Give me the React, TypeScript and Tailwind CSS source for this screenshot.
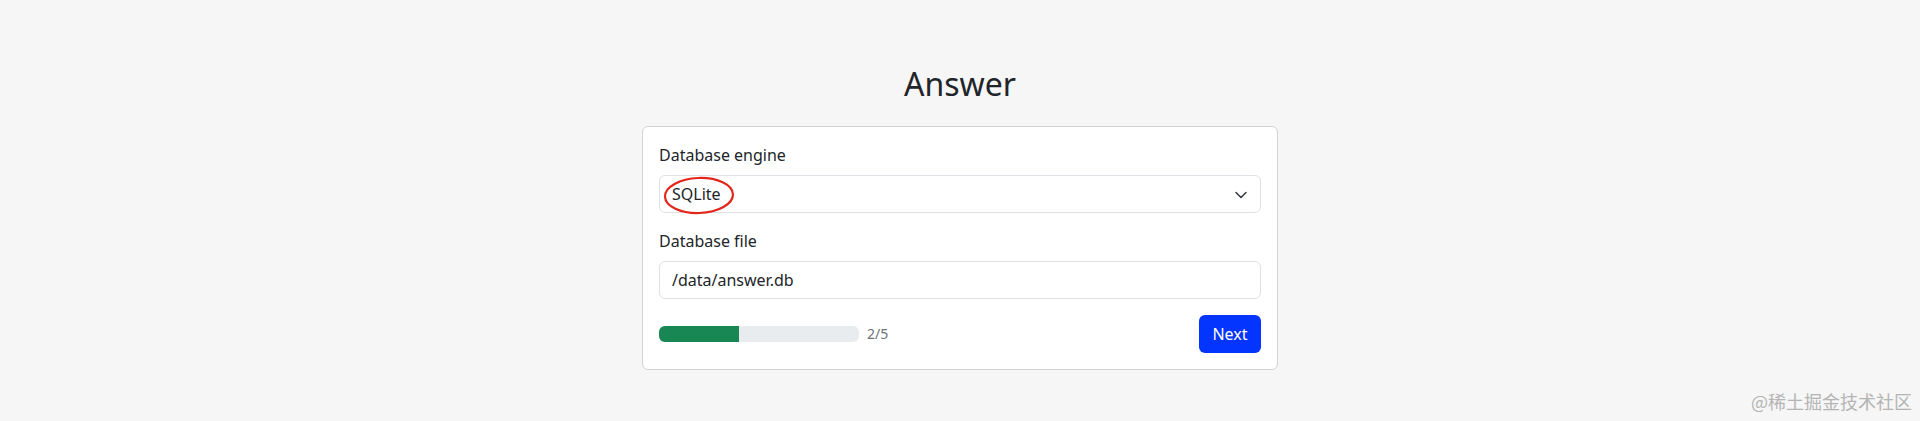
import { useState } from 'react';

// step wizard: config form for the answer db
const STEP = 2;
const TOTAL = 5;

export default function App() {
  const [engine] = useState('SQLite');
  const [file, setFile] = useState('/data/answer.db');

  const pct = (STEP / TOTAL) * 100;

  return (
    <div
      className="relative flex h-[421px] w-full flex-col items-center bg-[#f6f6f6] text-[#212529]"
      style={{ fontFamily: '"Segoe UI", "Noto Sans", sans-serif' }}
    >
      <h1 className="mt-[65px] mb-[23px] text-[32px] leading-[38px] font-normal">Answer</h1>

      <div className="w-[636px] rounded-md border border-[#d3d3d3] bg-white px-4 pt-4 pb-4">
        <label className="mb-2 block text-base leading-6">Database engine</label>
        <div className="relative mb-4 flex h-[38px] items-center justify-between rounded-md border border-[#dee2e6] bg-white pr-[13px] pl-3 text-base">
          <span>{engine}</span>
          <svg width="12" height="8" viewBox="0 0 12 8" fill="none" className="mt-[1px]">
            <path d="m1 1.5 5 5 5-5" stroke="#343a40" strokeWidth="1.5" strokeLinecap="round" strokeLinejoin="round" />
          </svg>
          {/* annotation ring */}
          <svg className="pointer-events-none absolute top-[0px] left-[3px]" width="72" height="39" viewBox="0 0 72 39">
            <ellipse cx="36" cy="19.5" rx="34" ry="17.5" fill="none" stroke="#e3261c" strokeWidth="2.2" transform="rotate(-2 36 19.5)" />
          </svg>
        </div>

        <label className="mb-2 block text-base leading-6">Database file</label>
        <input
          value={file}
          onChange={(e) => setFile(e.target.value)}
          className="mb-4 block h-[38px] w-full rounded-md border border-[#dee2e6] bg-white px-3 text-base outline-none"
        />

        <div className="flex items-center justify-between">
          <div className="flex items-center gap-2">
            <div className="h-4 w-[200px] overflow-hidden rounded-md bg-[#e9ecef]">
              <div className="h-full bg-[#198754]" style={{ width: `${pct}%` }} />
            </div>
            <span className="text-sm text-[#6c757d]">
              {STEP}/{TOTAL}
            </span>
          </div>
          <button className="h-[38px] w-[62px] rounded-md bg-[#0435ff] text-base text-white">Next</button>
        </div>
      </div>

      <div
        className="absolute right-[8px] bottom-[6px] text-[18px] text-[#b4b4b4]"
        style={{ fontFamily: '"Noto Sans CJK SC", sans-serif' }}
      >
        @稀土掘金技术社区
      </div>
    </div>
  );
}
